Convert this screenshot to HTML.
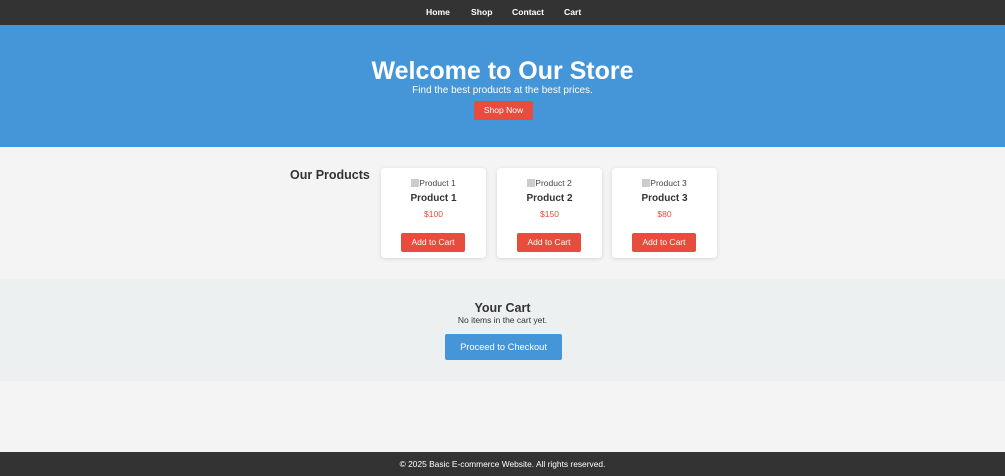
<!DOCTYPE html>
<html><head><meta charset="utf-8"><style>
*{margin:0;padding:0;box-sizing:border-box}
body{width:1005px;height:476px;background:#f4f4f4;font-family:"Liberation Sans",Arial,sans-serif;color:#333;position:relative;overflow:hidden}
.nav{position:absolute;top:0;left:0;width:1005px;height:25px;background:#333}
.nav a{position:absolute;top:7px;color:#fff;font-weight:bold;font-size:8.6px;text-decoration:none}
.hero{position:absolute;top:25px;left:0;width:1005px;height:122px;background:#4596d9;color:#fff;text-align:center}
.hero h1{position:absolute;top:32px;width:100%;font-size:25px;font-weight:bold}
.hero p{position:absolute;top:60px;width:100%;font-size:10px}
.btn{position:absolute;background:#e74c3c;color:#fff;font-size:8.5px;text-align:center;border-radius:2px}
.card{position:absolute;top:168px;width:105px;height:90px;background:#fff;border-radius:4px;box-shadow:0 1px 4px rgba(0,0,0,.12);text-align:center}
.card .img{position:absolute;top:10px;width:100%;font-size:8.5px;color:#444}
.card .img i{display:inline-block;width:8px;height:8px;background:#ccc;vertical-align:-1px}
.card h3{position:absolute;top:25px;width:100%;font-size:10px}
.card .pr{position:absolute;top:41px;width:100%;font-size:8.5px;color:#e74c3c}
.card .btn{left:20px;top:65px;width:64px;height:19px;line-height:19px;font-size:8.5px}
.cart{position:absolute;top:279px;left:0;width:1005px;height:102px;background:#ecf0f1;text-align:center}
.foot{position:absolute;top:452px;left:0;width:1005px;height:24px;background:#333;color:#fff;font-size:8.4px;text-align:center;line-height:24px}
</style></head><body>
<div class="nav"><a style="left:426px">Home</a><a style="left:471px">Shop</a><a style="left:512px">Contact</a><a style="left:564px">Cart</a></div>
<div class="hero"><h1>Welcome to Our Store</h1><p>Find the best products at the best prices.</p>
<div class="btn" style="left:474px;top:76px;width:59px;height:19px;line-height:19px">Shop Now</div></div>
<div style="position:absolute;left:290px;top:168px;font-size:12.5px;font-weight:bold">Our Products</div>
<div class="card" style="left:381px"><div class="img"><i></i>Product 1</div><h3>Product 1</h3><div class="pr">$100</div><div class="btn">Add to Cart</div></div>
<div class="card" style="left:497px"><div class="img"><i></i>Product 2</div><h3>Product 2</h3><div class="pr">$150</div><div class="btn">Add to Cart</div></div>
<div class="card" style="left:612px"><div class="img"><i></i>Product 3</div><h3>Product 3</h3><div class="pr">$80</div><div class="btn">Add to Cart</div></div>
<div class="cart">
<div style="position:absolute;top:22px;width:100%;font-size:12.5px;font-weight:bold">Your Cart</div>
<div style="position:absolute;top:36px;width:100%;font-size:8.5px">No items in the cart yet.</div>
<div style="position:absolute;left:445px;top:55px;width:117px;height:26px;line-height:26px;background:#4596d9;color:#fff;font-size:9.3px;border-radius:2px">Proceed to Checkout</div>
</div>
<div class="foot">© 2025 Basic E-commerce Website. All rights reserved.</div>
</body></html>
